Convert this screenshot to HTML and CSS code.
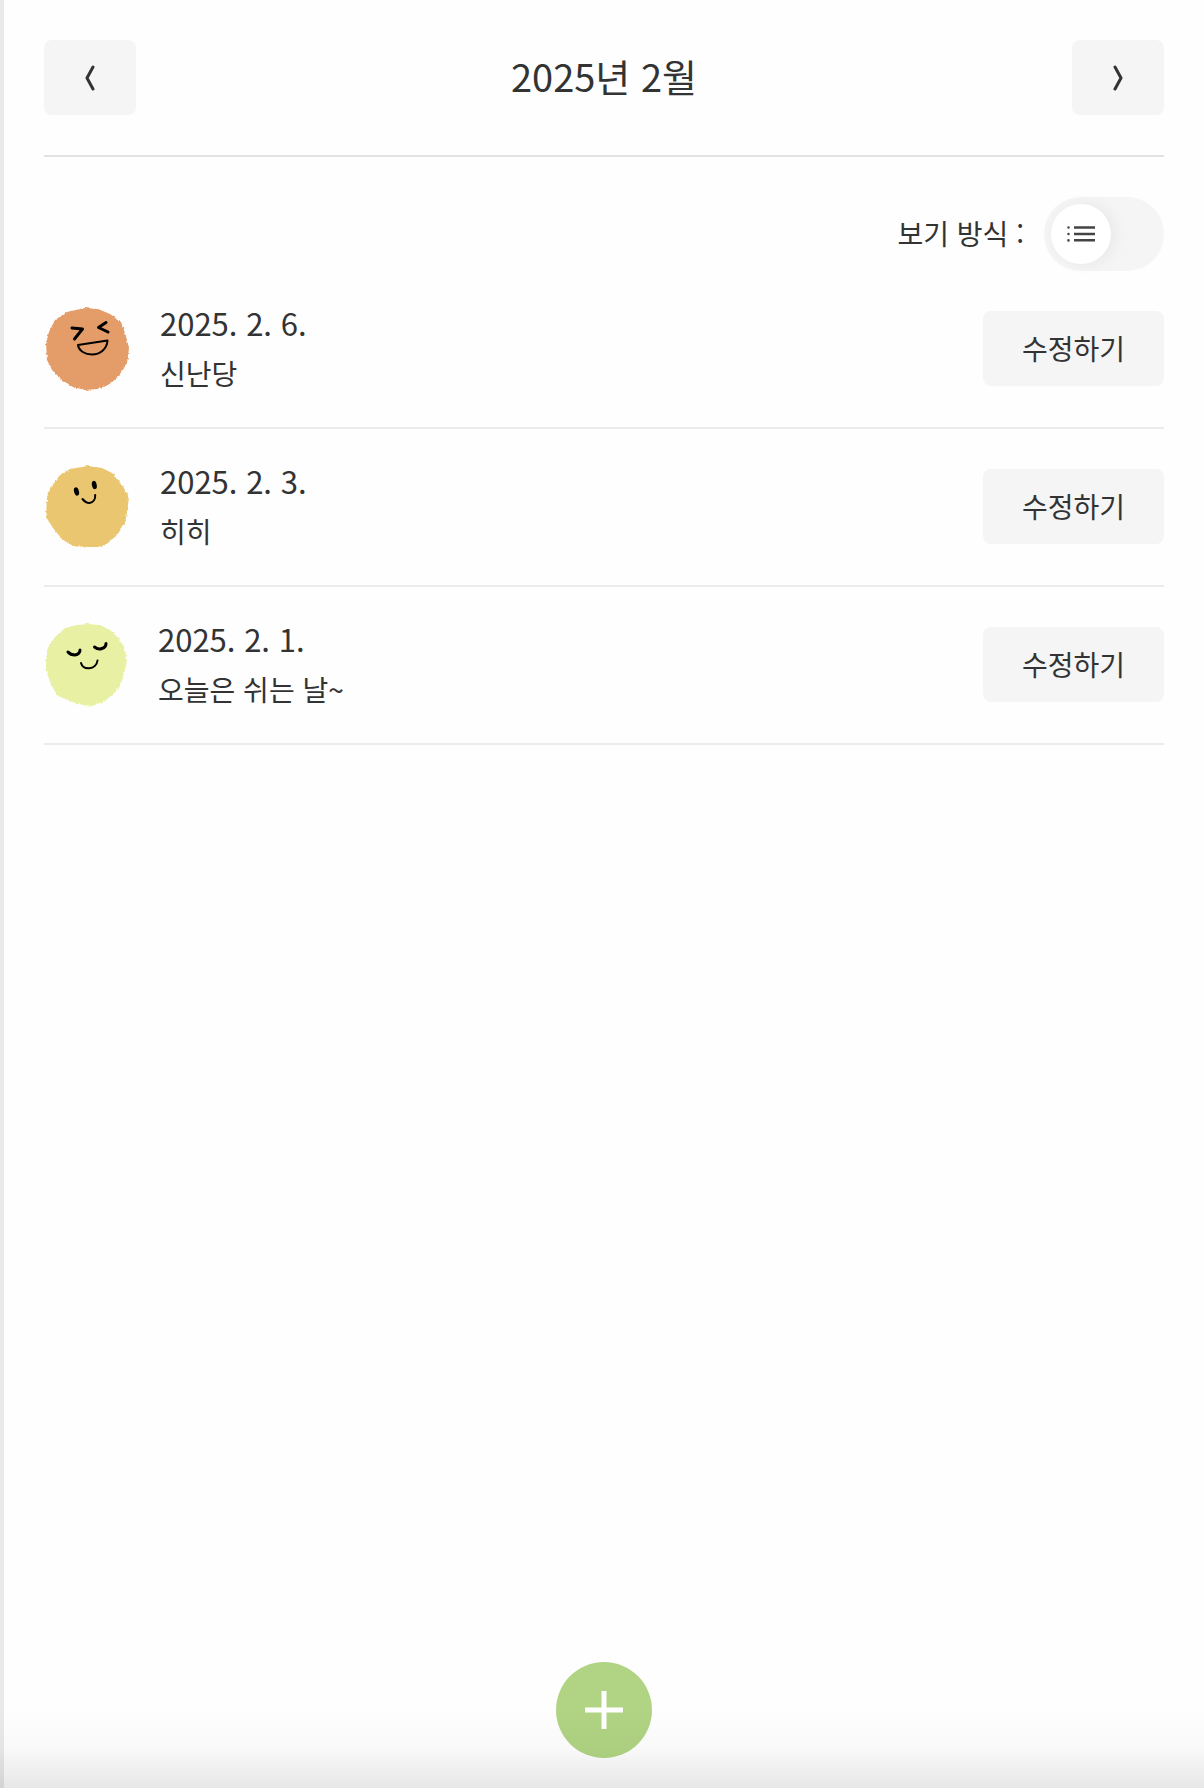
FILE: index.html
```html
<!DOCTYPE html>
<html lang="ko">
<head>
<meta charset="utf-8">
<meta name="viewport" content="width=device-width, initial-scale=1">
<title>감정 일기장</title>
<link rel="stylesheet" href="styles.css">
</head>
<body>
<main class="page">
  <header class="month-bar">
    <button class="button button-nav" type="button" aria-label="이전 달">
      <svg width="12" height="26" viewBox="0 0 12 26" aria-hidden="true"><path class="chevron" d="M9 2L3 13L9 24"/></svg>
    </button>
    <h1 class="month">2025년 2월</h1>
    <button class="button button-nav" type="button" aria-label="다음 달">
      <svg width="12" height="26" viewBox="0 0 12 26" aria-hidden="true"><path class="chevron" d="M3 2L9 13L3 24"/></svg>
    </button>
  </header>

  <div class="view-mode">
    <label class="view-label" for="view">보기 방식 :</label>
    <span class="switch">
      <input class="switch-input" id="view" type="checkbox" role="switch">
      <svg class="switch-icon" width="28" height="18" viewBox="0 0 28 18" aria-hidden="true">
        <path class="list-line" d="M7 2.500H28M7 9H28M7 15.300H28"/>
        <path class="list-dot" d="M1.500 2.500V2.600M1.500 9V9.100M1.500 15.300V15.400"/>
      </svg>
    </span>
  </div>

  <ul class="entries">
    <li class="entry">
      <svg class="mood" width="86" height="84" viewBox="0 0 86 84" aria-hidden="true">
        <defs>
          <filter id="fuzz" x="-5%" y="-5%" width="110%" height="110%">
            <feTurbulence type="fractalNoise" baseFrequency="0.35" numOctaves="2" seed="4" result="noise"/>
            <feDisplacementMap in="SourceGraphic" in2="noise" scale="3" xChannelSelector="R" yChannelSelector="G"/>
          </filter>
        </defs>
        <path class="blob" filter="url(#fuzz)" fill="#e49d67" d="M41 1L54 2L66 7L77 15L81 26L85 41L83 56L76 68L66 77L54 82L41 83L29 80L18 73L8 63L3 53L2 36L5 25L11 13L23 5Z"/>
        <path class="ink ink-bold" d="M28 21L38.500 22L30.500 32M62 15.500L54.500 20.500L64 25"/>
        <path class="ink" d="M34 38L63.500 33.500C63 42 56 47.500 48 47.500C41 47.500 35 44 34 38Z"/>
      </svg>
      <div class="entry-text">
        <time class="date" datetime="2025-02-06">2025. 2. 6.</time>
        <p class="note">신난당</p>
      </div>
      <button class="button" type="button">수정하기</button>
    </li>
    <li class="entry">
      <svg class="mood" width="86" height="84" viewBox="0 0 86 84" aria-hidden="true">
        <path class="blob" filter="url(#fuzz)" fill="#eac66f" d="M44 1L58 3L68 8L76 17L81 25L85 32L83 48L81 58L73 70L64 78L56 82L44 82L29 81L18 74L9 63L2 52L3 32L7 22L16 10L26 4Z"/>
        <ellipse cx="32.500" cy="26.500" rx="2.400" ry="4.200" transform="rotate(-16 32.500 26.500)"/>
        <ellipse cx="50.300" cy="20" rx="2.400" ry="4.200" transform="rotate(-12 50.300 20)"/>
        <path class="ink" d="M38.500 34C41 37 43 38.200 45.500 38C49.500 37.500 51.500 34 51.200 30"/>
      </svg>
      <div class="entry-text">
        <time class="date" datetime="2025-02-03">2025. 2. 3.</time>
        <p class="note">히히</p>
      </div>
      <button class="button" type="button">수정하기</button>
    </li>
    <li class="entry">
      <svg class="mood" width="84" height="84" viewBox="0 0 84 84" aria-hidden="true">
        <path class="blob" filter="url(#fuzz)" fill="#e8f1a3" d="M44 1L56 2L66 7L74 14L80 24L83 37L80 50L76 62L69 72L59 79L48 83L34 81L24 77L14 73L7 62L2 47L2 37L4 24L11 14L21 5L33 2Z"/>
        <path class="ink ink-bold" d="M24 29C26 31.500 28 32 31 32C34 31.500 36 29.500 36 27M50.500 24C53 26 55 26.500 58 25.500C61 24.500 62 22.500 62 20.500"/>
        <path class="ink" d="M37 40C38 43.500 41 45.500 45 45.300C50 45 53 41.500 53.500 37.500"/>
      </svg>
      <div class="entry-text">
        <time class="date" datetime="2025-02-01">2025. 2. 1.</time>
        <p class="note">오늘은 쉬는 날~</p>
      </div>
      <button class="button" type="button">수정하기</button>
    </li>
  </ul>

  <button class="add" type="button" aria-label="새 일기 쓰기">
    <svg width="38" height="38" viewBox="0 0 38 38" aria-hidden="true"><path class="plus" d="M19 0V38M0 19H38"/></svg>
  </button>
</main>
<div class="bottom-shade"></div>
</body>
</html>
```
FILE: styles.css
```css
* {
  box-sizing: border-box;
}

body {
  margin: 0;
  padding-left: 4px;
  background: #e9e9e9;
  color: #333;
  font-family: "Noto Sans CJK KR", sans-serif;
  font-size: 28px;
  line-height: 40px;
}

.page {
  display: flex;
  flex-direction: column;
  min-height: 100vh;
  padding: 0 40px 30px;
  background: #fefefe;
}

.month-bar {
  display: flex;
  align-items: center;
  justify-content: space-between;
  padding: 40px 0;
  border-bottom: 2px solid #e2e2e2;
}

.month {
  margin: 0;
  padding-bottom: 4px;
  font-size: 38px;
  font-weight: 400;
  line-height: 56px;
}

.button {
  height: 75px;
  padding: 0 39px 2px;
  border: 0;
  border-radius: 8px;
  background: #f5f5f5;
  color: inherit;
  font: inherit;
  cursor: pointer;
}

.button-nav {
  display: flex;
  align-items: center;
  padding: 0 40px;
}

.chevron {
  fill: none;
  stroke: #333;
  stroke-width: 3;
  stroke-linecap: round;
  stroke-linejoin: round;
}

.view-mode {
  display: flex;
  align-items: center;
  justify-content: flex-end;
  gap: 20px;
  padding-top: 40px;
}

.view-label {
  padding-bottom: 2px;
}

.switch {
  position: relative;
  display: flex;
}

.switch-input {
  appearance: none;
  width: 120px;
  height: 74px;
  margin: 0;
  padding: 7px;
  border-radius: 37px;
  background: #f5f5f5;
  cursor: pointer;
}

.switch-input::before {
  content: "";
  display: block;
  width: 60px;
  height: 60px;
  border-radius: 50%;
  background: #fff;
  box-shadow: 4px 0 16px rgba(0, 0, 0, 0.06);
}

.switch-icon {
  position: absolute;
  top: 28px;
  left: 23px;
  pointer-events: none;
}

.list-line,
.list-dot {
  stroke: #444;
  stroke-width: 2.5;
}

.list-dot {
  stroke-linecap: round;
}

.entries {
  margin: 0;
  padding: 0;
  list-style: none;
}

.entry {
  display: flex;
  align-items: center;
  min-height: 158px;
  padding-bottom: 1px;
  border-bottom: 2px solid #ebebeb;
}

.mood {
  flex: none;
  margin-right: 30px;
}

.ink {
  fill: none;
  stroke: #000;
  stroke-width: 2;
  stroke-linecap: round;
  stroke-linejoin: round;
}

.ink-bold {
  stroke-width: 3;
}

.entry-text {
  flex: 1;
}

.date {
  display: block;
  margin-bottom: 4px;
  font-size: 31px;
  line-height: 44px;
}

.note {
  margin: 0;
  line-height: 48px;
}

.add {
  display: flex;
  align-items: center;
  justify-content: center;
  align-self: center;
  width: 96px;
  height: 96px;
  margin-top: auto;
  padding: 0;
  border: 0;
  border-radius: 50%;
  background: #b0d483;
  cursor: pointer;
}

.plus {
  stroke: #fff;
  stroke-width: 5;
}

.bottom-shade {
  position: fixed;
  right: 0;
  bottom: 0;
  left: 0;
  height: 80px;
  background: linear-gradient(rgba(0, 0, 0, 0), rgba(0, 0, 0, 0.02) 50%, rgba(0, 0, 0, 0.09));
  pointer-events: none;
}
```
